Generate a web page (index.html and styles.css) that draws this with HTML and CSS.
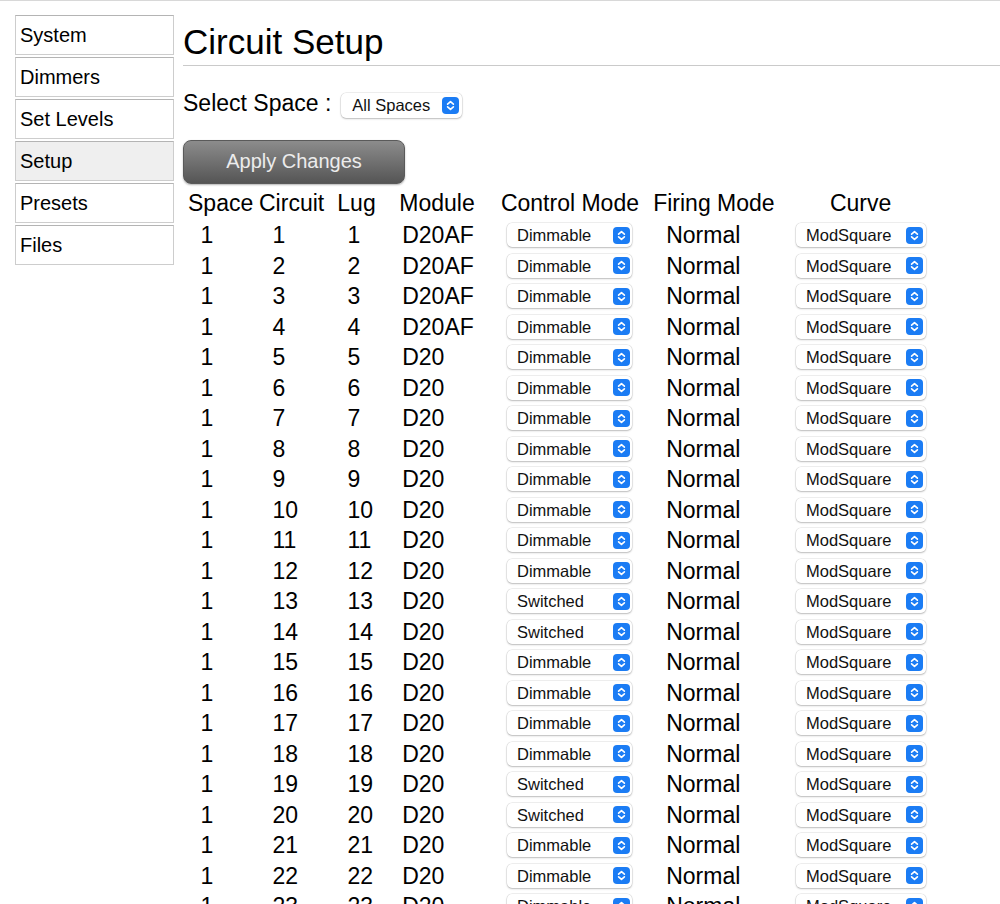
FILE: index.html
```html
<!DOCTYPE html>
<html lang="en">
<head>
<meta charset="utf-8">
<title>Circuit Setup</title>
<link rel="stylesheet" href="styles.css">
</head>
<body>
<svg class="defs" width="0" height="0" aria-hidden="true">
  <symbol id="chev" viewBox="0 0 17 17">
    <rect x="0" y="0" width="17" height="17" rx="4" fill="#1b7cf4"/>
    <path d="M5.6 7.2 L8.5 4.6 L11.4 7.2 M5.6 9.8 L8.5 12.4 L11.4 9.8" fill="none" stroke="#fff" stroke-width="1.6" stroke-linecap="round" stroke-linejoin="round"/>
  </symbol>
</svg>
<div class="page">
  <nav class="sidebar">
    <a class="nav-item" href="#">System</a>
    <a class="nav-item" href="#">Dimmers</a>
    <a class="nav-item" href="#">Set Levels</a>
    <a class="nav-item active" href="#">Setup</a>
    <a class="nav-item" href="#">Presets</a>
    <a class="nav-item" href="#">Files</a>
  </nav>
  <main class="main">
    <h1 class="title">Circuit Setup</h1>
    <div class="space-row">
      <span class="label">Select Space :</span>
      <span class="select select-space"><span class="select-text">All Spaces</span><svg class="chev"><use href="#chev"/></svg></span>
    </div>
    <button class="apply">Apply Changes</button>
    <table class="circuits">
      <colgroup>
        <col class="w1"><col class="w2"><col class="w3"><col class="w4"><col class="w5"><col class="w6"><col class="w7">
      </colgroup>
      <thead>
        <tr><th>Space</th><th>Circuit</th><th>Lug</th><th>Module</th><th>Control Mode</th><th>Firing Mode</th><th>Curve</th></tr>
      </thead>
      <tbody id="rows"></tbody>
    </table>
  </main>
</div>
<script src="script.js"></script>
</body>
</html>
```

FILE: script.js
```js
(function () {
  var switched = { 13: 1, 14: 1, 19: 1, 20: 1 };
  var tbody = document.getElementById('rows');
  var html = '';
  function sel(cls, text) {
    return '<span class="select ' + cls + '"><span class="select-text">' + text +
      '</span><svg class="chev"><use href="#chev"/></svg></span>';
  }
  for (var i = 1; i <= 24; i++) {
    html += '<tr>' +
      '<td>1</td>' +
      '<td>' + i + '</td>' +
      '<td>' + i + '</td>' +
      '<td>' + (i <= 4 ? 'D20AF' : 'D20') + '</td>' +
      '<td>' + sel('select-mode', switched[i] ? 'Switched' : 'Dimmable') + '</td>' +
      '<td>Normal</td>' +
      '<td>' + sel('select-curve', 'ModSquare') + '</td>' +
      '</tr>';
  }
  tbody.innerHTML = html;
})();
```

FILE: styles.css
```css
html, body {
  margin: 0;
  padding: 0;
  background: #fff;
}
body {
  border-top: 1px solid #d8d8d8;
  font-family: "Liberation Sans", Arial, Helvetica, sans-serif;
  color: #000;
}
.defs {
  position: absolute;
  width: 0;
  height: 0;
  overflow: hidden;
}
.page {
  display: flex;
  align-items: flex-start;
}
.sidebar {
  display: flex;
  flex-direction: column;
  gap: 2px;
  width: 159px;
  margin: 14px 0 0 15px;
}
.nav-item {
  display: block;
  height: 38px;
  line-height: 38px;
  padding-left: 4px;
  border: 1px solid #cdcdcd;
  border-top-color: #b4b4b4;
  font-size: 20px;
  color: #000;
  text-decoration: none;
}
.nav-item.active {
  background: #efefef;
}
.main {
  flex: 1;
  margin-left: 9px;
  padding-top: 21px;
}
.title {
  margin: 0;
  font-size: 35px;
  font-weight: normal;
  line-height: 40px;
  height: 40px;
  padding-bottom: 3px;
  border-bottom: 1.5px solid #cacaca;
}
.space-row {
  display: flex;
  align-items: baseline;
  gap: 10px;
  margin-top: 24px;
}
.label {
  font-size: 23px;
  line-height: 26px;
}
.select {
  display: flex;
  align-items: center;
  justify-content: space-between;
  box-sizing: border-box;
  height: 24px;
  background: #fff;
  border-radius: 5px;
  box-shadow: 0 0 0 0.5px rgba(0, 0, 0, 0.12), 0 1px 2px rgba(0, 0, 0, 0.22);
  font-size: 16.5px;
  color: #111;
  line-height: 24px;
}
.select-text {
  line-height: 24px;
}
.chev {
  width: 17px;
  height: 17px;
  flex: none;
}
.select-space {
  display: inline-flex;
  width: 121px;
  height: 25px;
  padding: 0 3px 0 11px;
}
.select-mode {
  width: 125px;
  padding: 0 2px 0 10px;
}
.select-curve {
  width: 130px;
  padding: 0 3px 0 10px;
}
.apply {
  display: block;
  width: 222px;
  height: 44px;
  margin-top: 22px;
  padding: 0;
  border: 1px solid #5a5a5a;
  border-radius: 8px;
  background: linear-gradient(#8c8c8c, #555);
  box-shadow: 0 1px 2px rgba(0, 0, 0, 0.3);
  font-family: "Liberation Sans", Arial, sans-serif;
  font-size: 20px;
  color: #ececec;
}
.circuits {
  table-layout: fixed;
  border-collapse: collapse;
  border-spacing: 0;
  margin: 3.5px 0 0 1px;
  width: 752px;
  font-size: 23px;
}
.w1 { width: 73px; }
.w2 { width: 78px; }
.w3 { width: 62px; }
.w4 { width: 100px; }
.w5 { width: 153px; }
.w6 { width: 141px; }
.w7 { width: 145px; }
.circuits th,
.circuits td {
  padding: 0;
  text-align: left;
  white-space: nowrap;
  font-weight: normal;
  line-height: 26px;
  vertical-align: middle;
}
.circuits thead tr { height: 32.8px; }
.circuits tbody tr { height: 30.5px; }
.circuits th:nth-child(1) { padding-left: 4px; }
.circuits th:nth-child(2) { padding-left: 2px; }
.circuits th:nth-child(3) { padding-left: 2.3px; }
.circuits th:nth-child(4) { padding-left: 2.3px; }
.circuits th:nth-child(5) { padding-left: 3.9px; }
.circuits th:nth-child(6) { padding-left: 3.2px; }
.circuits th:nth-child(7) { padding-left: 38.9px; }
.circuits td:nth-child(1) { padding-left: 16.5px; }
.circuits td:nth-child(2) { padding-left: 15.5px; }
.circuits td:nth-child(3) { padding-left: 12.5px; }
.circuits td:nth-child(4) { padding-left: 5.2px; }
.circuits td:nth-child(5) { padding-left: 10px; }
.circuits td:nth-child(6) { padding-left: 16.2px; }
.circuits td:nth-child(7) { padding-left: 5px; }
```
